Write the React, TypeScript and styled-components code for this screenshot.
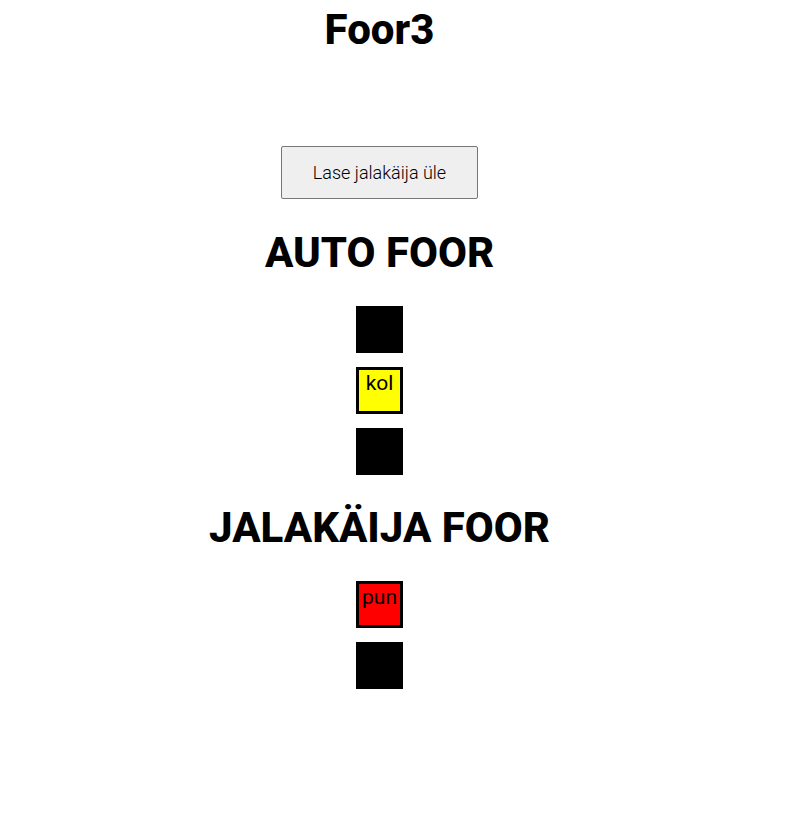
import React from "react";
import styled, { createGlobalStyle } from "styled-components";

const GlobalStyle = createGlobalStyle`
  * { box-sizing: border-box; }
  body {
    margin: 0;
    background: #fff;
    color: #000;
    font-family: Roboto, "Liberation Sans", sans-serif;
    font-size: 21px;
    font-weight: 400;
  }
`;

const Page = styled.main`
  display: flex;
  flex-direction: column;
  align-items: center;
  padding: 5px 29px 0 0;
`;

const Title = styled.h1`
  margin: 0;
  font-size: 42px;
  line-height: 50px;
  font-weight: 800;
  text-align: center;
`;

const CrossButton = styled.button`
  margin: 91px 0 29px;
  padding: 15px 31px;
  border: 1px solid #767676;
  border-radius: 2px;
  background: #efefef;
  color: #000;
  font-family: inherit;
  font-size: 18px;
  font-weight: 300;
  line-height: 21px;
  cursor: pointer;
`;

const Lights = styled.div`
  display: flex;
  flex-direction: column;
  gap: 14px;
  padding: 28px 0;
`;

const Light = styled.div<{ $color: string }>`
  width: 47px;
  height: 47px;
  border: 3px solid #000;
  background: ${(p) => p.$color};
  line-height: 26px;
  text-align: center;
`;

export default function App() {
  return (
    <>
      <GlobalStyle />
      <Page>
        <Title>Foor3</Title>
        <CrossButton type="button">Lase jalakäija üle</CrossButton>
        <Title as="h2">AUTO FOOR</Title>
        <Lights>
          <Light $color="black" />
          <Light $color="yellow">kol</Light>
          <Light $color="black" />
        </Lights>
        <Title as="h2">JALAKÄIJA FOOR</Title>
        <Lights>
          <Light $color="red">pun</Light>
          <Light $color="black" />
        </Lights>
      </Page>
    </>
  );
}
